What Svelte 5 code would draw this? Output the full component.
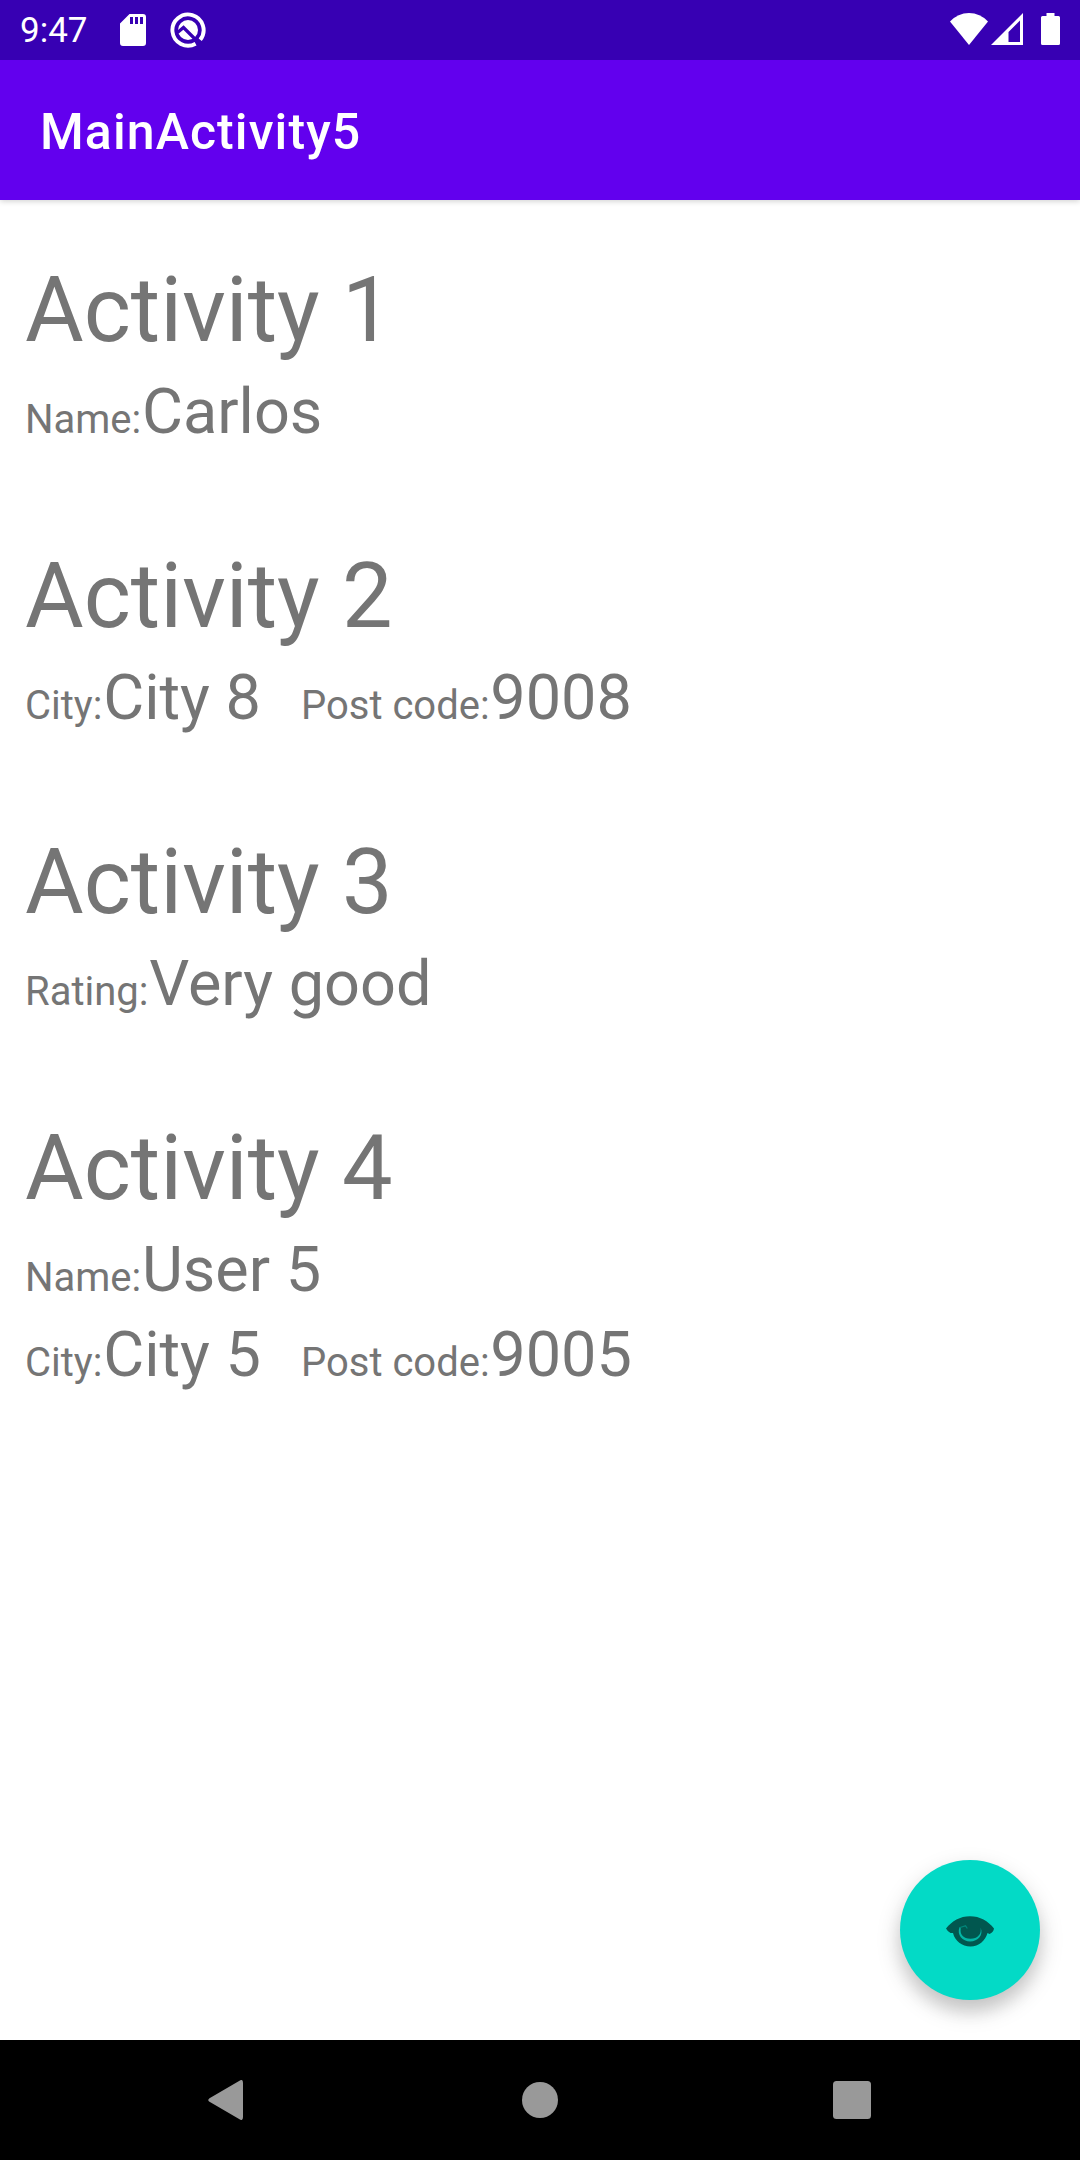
<script lang="ts">
  type Field = { label: string; value: string };
  type Section = { title: string; rows: Field[][] };

  const sections: Section[] = [
    { title: 'Activity 1', rows: [[{ label: 'Name:', value: 'Carlos' }]] },
    {
      title: 'Activity 2',
      rows: [[{ label: 'City:', value: 'City 8' }, { label: 'Post code:', value: '9008' }]],
    },
    { title: 'Activity 3', rows: [[{ label: 'Rating:', value: 'Very good' }]] },
    {
      title: 'Activity 4',
      rows: [
        [{ label: 'Name:', value: 'User 5' }],
        [{ label: 'City:', value: 'City 5' }, { label: 'Post code:', value: '9005' }],
      ],
    },
  ];
</script>

<div class="screen">
  <div class="status">
    <span class="time">9:47</span>
    <svg class="sd" viewBox="0 0 26 32" width="26" height="32" aria-hidden="true">
      <path fill="#fff" fill-rule="evenodd" d="M9.500 0H23a3 3 0 0 1 3 3V29a3 3 0 0 1-3 3H3a3 3 0 0 1-3-3V9.500ZM10 3V10h3V3ZM15 3V10h3V3ZM20 3V10h3V3Z" />
    </svg>
    <svg class="q" viewBox="0 0 36 36" width="36" height="36" aria-hidden="true">
      <path fill="none" stroke="#fff" stroke-width="3.900" d="M30.200 27.800A15.600 15.600 0 1 0 25.600 31.700" />
      <circle cx="18" cy="18" r="10" fill="#fff" />
      <path fill="none" stroke="#3700b3" stroke-width="3.200" d="M7.500 20.500 13.500 15.500 29.500 31.500" />
    </svg>
    <div class="signals">
      <svg viewBox="0 0 38 32" width="38" height="32" aria-hidden="true">
        <path fill="#fff" d="M0 8.500Q8 0 19 0T38 8.500L19 32Z" />
      </svg>
      <svg viewBox="0 0 32 32" width="32" height="32" aria-hidden="true">
        <path fill="#fff" fill-rule="evenodd" d="M0 32 32 0V32ZM17.500 19V29H29V7.500Z" />
      </svg>
      <svg class="battery" viewBox="0 0 19 32" width="19" height="32" aria-hidden="true">
        <path fill="#fff" d="M5.500 0H13.500V3H17.500A1.500 1.500 0 0 1 19 4.500V30.500A1.500 1.500 0 0 1 17.500 32H1.500A1.500 1.500 0 0 1 0 30.500V4.500A1.500 1.500 0 0 1 1.500 3H5.500Z" />
      </svg>
    </div>
  </div>

  <header class="appbar"><h1>MainActivity5</h1></header>

  <main>
    {#each sections as section}
      <section>
        <h2>{section.title}</h2>
        {#each section.rows as row}
          <div class="row">
            {#each row as field}
              <div class="field"><span class="label">{field.label}</span><span class="value">{field.value}</span></div>
            {/each}
          </div>
        {/each}
      </section>
    {/each}
    <button class="fab" aria-label="View">
      <svg viewBox="0 0 48 32" width="48" height="32" aria-hidden="true">
        <path fill="#01574f" d="M0 12.500C6 5 14 .300 24 .300S42 5 48 12.500Q47.500 16 43.500 18L41.500 17C39 25 33 30.500 24.500 30.500S9 25 7 17L4.500 17Q1.500 15.500 0 12.500Z" />
        <path fill="#03b5a5" d="M13.500 11C10.500 19 16.500 25.500 24.200 25.500S38 19 34.500 11.500C36 18 31.500 22.800 24.500 22.800S13.500 18 14.800 12.500Z" />
        <path fill="none" stroke="#028579" stroke-width="1.300" stroke-linecap="round" d="M14 11.500 19.500 9.800 21 12" />
      </svg>
    </button>
  </main>

  <nav>
    <svg viewBox="0 0 36 40" width="36" height="40" aria-hidden="true">
      <path fill="#999" d="M31.500.700Q35-1.500 35 3V37Q35 41.500 31.500 39.300L1.500 21.800Q-1 20 1.500 18.200Z" />
    </svg>
    <svg viewBox="0 0 36 36" width="36" height="36" aria-hidden="true"><circle cx="18" cy="18" r="18" fill="#999" /></svg>
    <svg viewBox="0 0 38 38" width="38" height="38" aria-hidden="true"><rect width="38" height="38" rx="3.500" fill="#999" /></svg>
  </nav>
</div>

<style>
  :global(body) {
    margin: 0;
  }
  .screen {
    width: 1080px;
    height: 2160px;
    display: flex;
    flex-direction: column;
    overflow: hidden;
    background: #fff;
    font-family: Roboto, sans-serif;
  }
  svg {
    display: block;
    flex: none;
  }
  .status {
    height: 60px;
    flex: none;
    box-sizing: border-box;
    display: flex;
    align-items: center;
    padding: 0 20px;
    background: #3700b3;
    color: #fff;
  }
  .time {
    width: 100px;
    padding-top: 2px;
    font-size: 35px;
    line-height: 60px;
  }
  .q {
    margin-left: 24px;
  }
  .signals {
    display: flex;
    margin-left: auto;
    margin-top: -3px;
    gap: 3px;
  }
  .battery {
    margin-left: 15px;
  }
  .appbar {
    height: 140px;
    flex: none;
    display: flex;
    align-items: center;
    padding-left: 40px;
    background: #6200ee;
    box-shadow: 0 1px 6px rgba(0, 0, 0, 0.2);
    clip-path: inset(0 0 -20px 0);
    z-index: 1;
  }
  h1 {
    margin: 0;
    padding-top: 4px;
    color: #fff;
    font-size: 50px;
    font-weight: 500;
    letter-spacing: 1.1px;
  }
  main {
    position: relative;
    flex: 1;
    display: flex;
    flex-direction: column;
    gap: 83px;
    padding: 51px 25px 0;
    color: #757575;
  }
  h2 {
    margin: 0;
    height: 118px;
    font-size: 90px;
    font-weight: 400;
    line-height: 120px;
  }
  .row {
    display: flex;
    gap: 40px;
    height: 85px;
  }
  .field {
    white-space: nowrap;
    font-size: 63px;
    line-height: 85px;
  }
  .label {
    padding-right: 0.7px;
    font-size: 40px;
  }
  .fab {
    position: absolute;
    right: 40px;
    bottom: 40px;
    width: 140px;
    height: 140px;
    display: grid;
    place-items: center;
    padding: 0;
    border: 0;
    border-radius: 50%;
    background: #03dac6;
    box-shadow: 0 10px 25px rgba(0, 0, 0, 0.18), 0 12px 16px rgba(0, 0, 0, 0.09);
  }
  .fab svg {
    margin-top: 4px;
  }
  nav {
    height: 120px;
    flex: none;
    box-sizing: border-box;
    display: flex;
    align-items: center;
    justify-content: space-between;
    padding: 0 209px 0 208px;
    background: #000;
  }
  nav svg:nth-child(2) {
    margin-left: 2px;
  }
</style>
